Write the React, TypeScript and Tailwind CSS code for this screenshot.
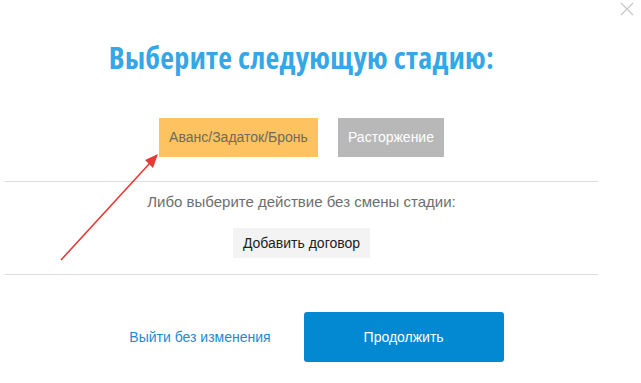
import React from "react";

export default function App() {
  return (
    <div className="relative w-[641px] h-[383px] bg-white overflow-hidden" style={{ fontFamily: "Arial, 'Liberation Sans', sans-serif" }}>
      <button className="absolute right-[6px] top-[1px] w-[16px] h-[16px] flex items-center justify-center">
        <svg width="14" height="14" viewBox="0 0 14 14">
          <path d="M1 1 L13 13 M13 1 L1 13" stroke="#c8c8c8" strokeWidth="1.3" />
        </svg>
      </button>
      <div className="ml-[5px] w-[593px] flex flex-col items-center">
        <h1
          className="mt-[37px] h-[41px] text-[30px] leading-[41px] font-bold tracking-[0.3px] text-[#35a6e7] whitespace-nowrap"
          style={{ fontFamily: "'Open Sans', sans-serif", fontStretch: "condensed" }}
        >
          Выберите следующую стадию:
        </h1>
        <div className="mt-[40px] flex gap-[20px]">
          <button className="w-[159px] h-[39px] bg-[#fcc360] text-[#6f6a5f] text-[14px]">Аванс/Задаток/Бронь</button>
          <button className="w-[106px] h-[39px] bg-[#b8b8b8] text-white text-[14px]">Расторжение</button>
        </div>
        <div className="mt-[24px] w-full h-px bg-[#dddddd]" />
        <p className="mt-[11px] text-[15px] leading-[17px] text-[#6e6e6e]">Либо выберите действие без смены стадии:</p>
        <button className="mt-[18px] w-[137px] h-[30px] bg-[#f3f3f3] text-[#222] text-[14px]">Добавить договор</button>
        <div className="mt-[16px] w-full h-px bg-[#dddddd]" />
        <div className="mt-[37px] flex items-center gap-[33px] ml-[30px]">
          <button className="text-[14px] text-[#1c8ad3]">Выйти без изменения</button>
          <button className="w-[200px] h-[50px] rounded-[3px] bg-[#0389d1] text-white text-[14px]">Продолжить</button>
        </div>
      </div>
      <svg className="absolute left-0 top-0 pointer-events-none" width="641" height="383">
        <line x1="61" y1="260" x2="150" y2="163" stroke="#e53a35" strokeWidth="1.6" />
        <polygon points="158,154 145,160 153,168" fill="#e53a35" />
      </svg>
    </div>
  );
}
